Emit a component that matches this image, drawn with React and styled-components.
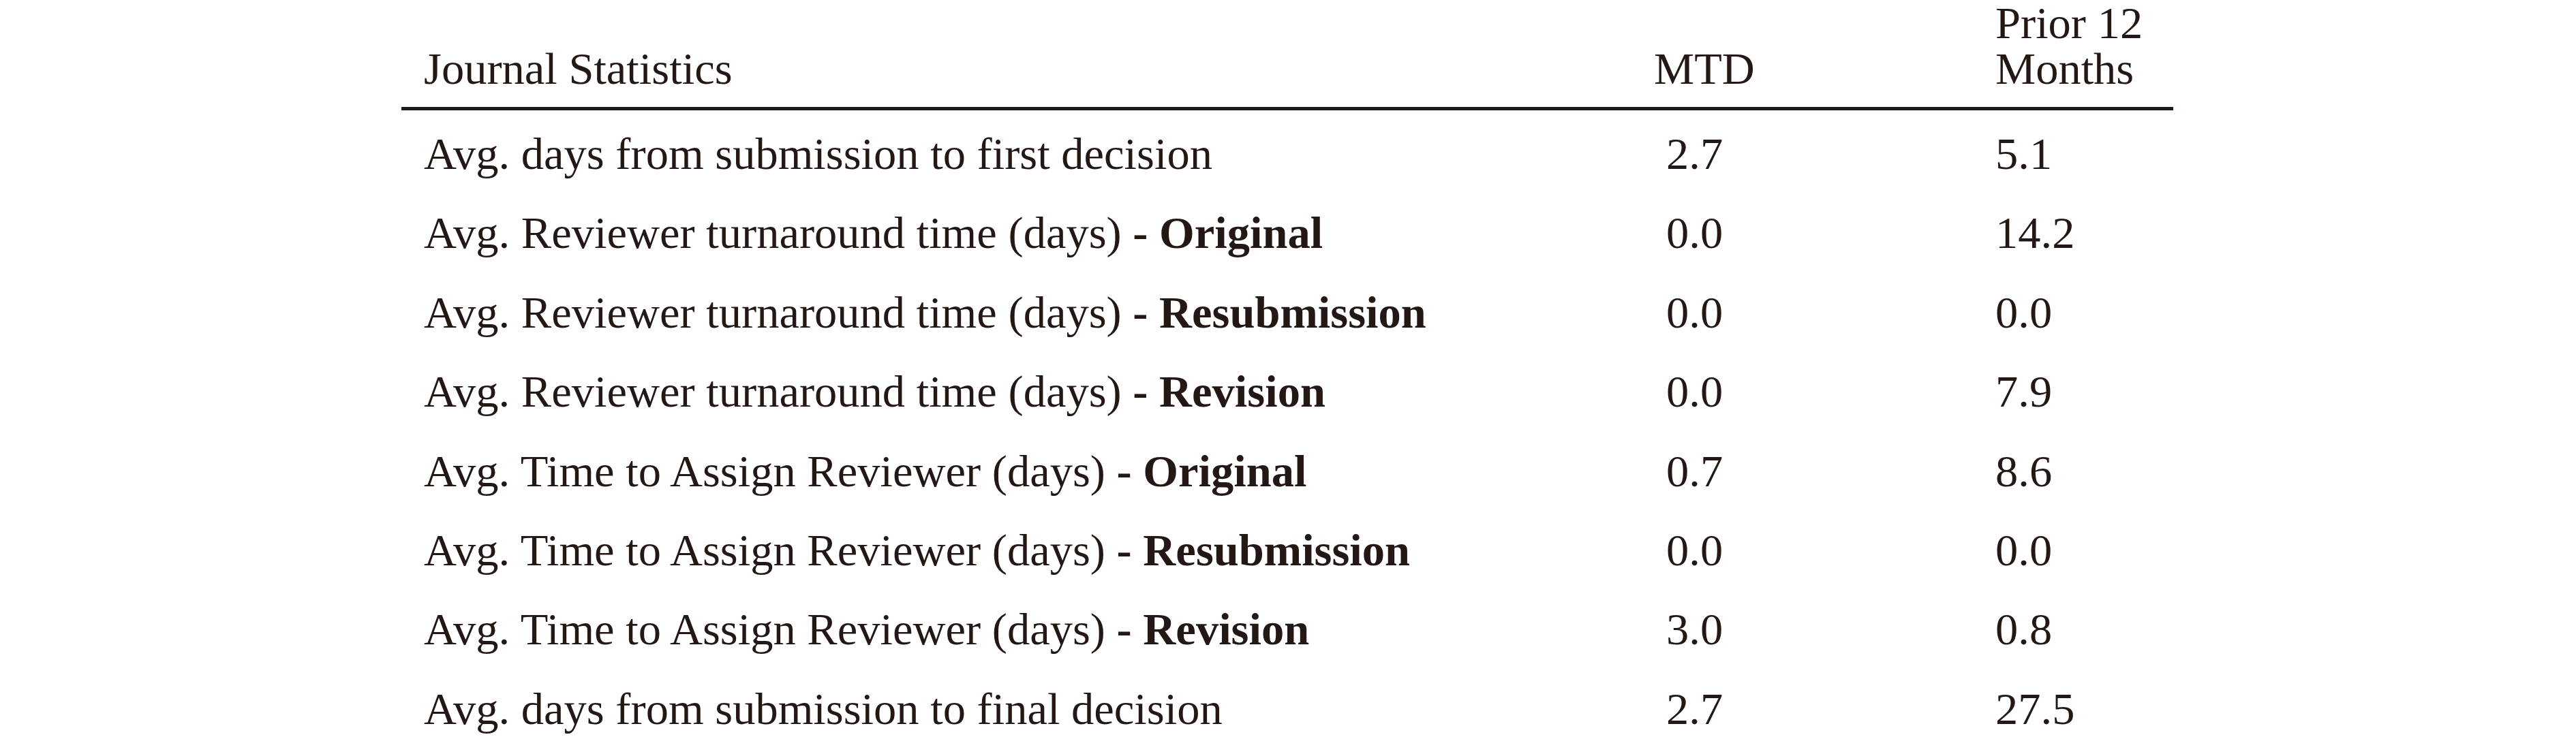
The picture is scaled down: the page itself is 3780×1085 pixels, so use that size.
import React from "react";
import styled, { createGlobalStyle } from "styled-components";

const GlobalStyle = createGlobalStyle`
	html, body {
		margin: 0;
		padding: 0;
		background: #ffffff;
	}
	body {
		font-family: "Liberation Serif", "Times New Roman", serif;
		color: #231815;
	}
`;

const rows = [
	{ label: "Avg. days from submission to first decision", mtd: "2.7", prior: "5.1" },
	{ label: "Avg. Reviewer turnaround time (days)", tag: "Original", mtd: "0.0", prior: "14.2" },
	{ label: "Avg. Reviewer turnaround time (days)", tag: "Resubmission", mtd: "0.0", prior: "0.0" },
	{ label: "Avg. Reviewer turnaround time (days)", tag: "Revision", mtd: "0.0", prior: "7.9" },
	{ label: "Avg. Time to Assign Reviewer (days)", tag: "Original", mtd: "0.7", prior: "8.6" },
	{ label: "Avg. Time to Assign Reviewer (days)", tag: "Resubmission", mtd: "0.0", prior: "0.0" },
	{ label: "Avg. Time to Assign Reviewer (days)", tag: "Revision", mtd: "3.0", prior: "0.8" },
	{ label: "Avg. days from submission to final decision", mtd: "2.7", prior: "27.5" },
];

export default function App() {
	return (
		<>
			<GlobalStyle />
			<Page>
				<Table>
					<Head>
						<LabelCell>Journal Statistics</LabelCell>
						<MtdCell $head>MTD</MtdCell>
						<PriorCell>
							Prior 12
							<br />
							Months
						</PriorCell>
					</Head>
					{rows.map((row, i) => (
						<Row key={i}>
							<LabelCell>
								{row.label}
								{row.tag && <Tag> - {row.tag}</Tag>}
							</LabelCell>
							<MtdCell>{row.mtd}</MtdCell>
							<PriorCell>{row.prior}</PriorCell>
						</Row>
					))}
				</Table>
			</Page>
		</>
	);
}

const Page = styled.div`
	width: 3780px;
	height: 1085px;
	padding-left: 589px;
	box-sizing: border-box;
	overflow: hidden;
`;

const Table = styled.div`
	width: 2600px;
	font-size: 66.5px;
	line-height: 67px;
`;

const Head = styled.div`
	display: grid;
	grid-template-columns: 1838px 501px 261px;
	align-items: end;
	height: 162px;
	padding-bottom: 23px;
	box-sizing: border-box;
	border-bottom: 5px solid #231815;
`;

const Row = styled.div`
	display: grid;
	grid-template-columns: 1838px 501px 261px;
	align-items: start;
	height: 116.4px;
	padding-top: 30px;
	box-sizing: border-box;
`;

const LabelCell = styled.div`
	padding-left: 33px;
	white-space: nowrap;
`;

const MtdCell = styled.div`
	padding-left: ${(props) => (props.$head ? "0" : "18px")};
	white-space: nowrap;
`;

const PriorCell = styled.div`
	white-space: nowrap;
`;

const Tag = styled.span`
	font-weight: 700;
`;
